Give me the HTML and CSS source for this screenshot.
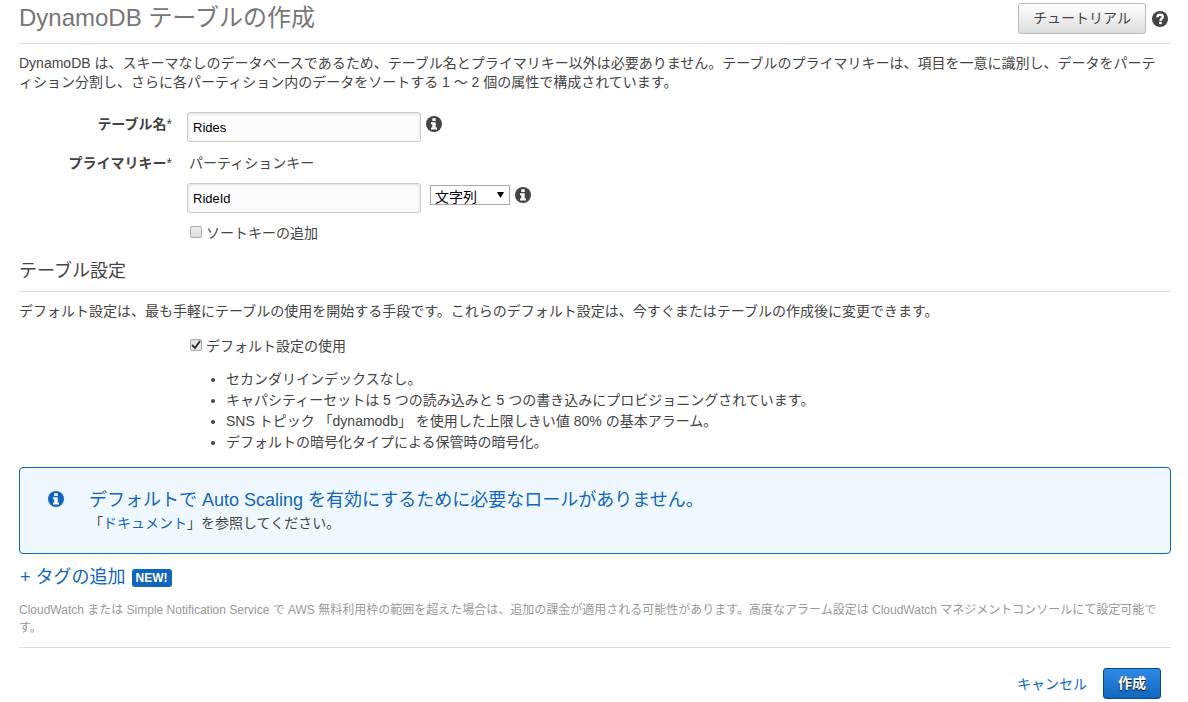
FILE: index.html
```html
<!DOCTYPE html>
<html lang="ja">

<head>
    <meta charset="UTF-8">
    <meta name="viewport" content="width=device-width, initial-scale=1.0">
    <title>DynamoDB テーブルの作成</title>
    <link rel="stylesheet" href="styles.css">
</head>

<body>

    <!-- Shared icons -->
    <svg class="sprite" aria-hidden="true">
        <symbol id="icon-info" viewBox="0 0 16 16">
            <circle cx="8" cy="8" r="8" fill="currentColor"/>
            <path d="M6.300 2.300h3.400v2.700H6.300zM5 6.200h4.700v5.200H11v2H5v-2h1.300V8.200H5z" fill="#fff"/>
        </symbol>
        <symbol id="icon-help" viewBox="0 0 16 16">
            <circle cx="8" cy="8" r="8" fill="currentColor"/>
            <path d="M5.300 6.300C5.400 4.600 6.500 3.800 8.100 3.800c1.600 0 2.700.8 2.700 2.200 0 1.800-2.300 1.700-2.300 3.700" fill="none" stroke="#fff" stroke-width="2.400"/>
            <path d="M7.200 10.700h2.600v2.500H7.200z" fill="#fff"/>
        </symbol>
    </svg>

    <!-- Header -->
    <header class="page-header">
        <h1>DynamoDB テーブルの作成</h1>
        <div class="header-actions">
            <button type="button" class="btn">チュートリアル</button>
            <a href="#" class="icon-link" aria-label="ヘルプ"><svg class="icon"><use href="#icon-help"/></svg></a>
        </div>
    </header>

    <main>
        <p class="intro">DynamoDB は、スキーマなしのデータベースであるため、テーブル名とプライマリキー以外は必要ありません。テーブルのプライマリキーは、項目を一意に識別し、データをパーティション分割し、さらに各パーティション内のデータをソートする 1 〜 2 個の属性で構成されています。</p>

        <form id="create-table">
            <!-- Table name and key -->
            <div class="form-row">
                <label class="form-label" for="table-name">テーブル名<span class="required">*</span></label>
                <div class="form-field">
                    <input type="text" class="text-input" id="table-name" value="Rides">
                    <svg class="icon"><use href="#icon-info"/></svg>
                </div>
            </div>
            <div class="form-row">
                <label class="form-label" for="partition-key">プライマリキー<span class="required">*</span></label>
                <div class="form-stack">
                    <span class="key-title">パーティションキー</span>
                    <div class="form-field key-field">
                        <input type="text" class="text-input" id="partition-key" value="RideId">
                        <select class="type-select" aria-label="キーの型">
                            <option>文字列</option>
                            <option>バイナリ</option>
                            <option>数値</option>
                        </select>
                        <svg class="icon"><use href="#icon-info"/></svg>
                    </div>
                    <label class="check"><input type="checkbox">ソートキーの追加</label>
                </div>
            </div>

            <!-- Table settings -->
            <h2>テーブル設定</h2>
            <p class="settings-text">デフォルト設定は、最も手軽にテーブルの使用を開始する手段です。これらのデフォルト設定は、今すぐまたはテーブルの作成後に変更できます。</p>
            <div class="settings">
                <label class="check"><input type="checkbox" checked>デフォルト設定の使用</label>
                <ul>
                    <li>セカンダリインデックスなし。</li>
                    <li>キャパシティーセットは 5 つの読み込みと 5 つの書き込みにプロビジョニングされています。</li>
                    <li>SNS トピック 「dynamodb」 を使用した上限しきい値 80% の基本アラーム。</li>
                    <li>デフォルトの暗号化タイプによる保管時の暗号化。</li>
                </ul>
            </div>

            <div class="alert">
                <svg class="icon"><use href="#icon-info"/></svg>
                <div>
                    <h3>デフォルトで Auto Scaling を有効にするために必要なロールがありません。</h3>
                    <p>「<a href="#">ドキュメント</a>」を参照してください。</p>
                </div>
            </div>

            <div class="tags">
                <a href="#">+ タグの追加</a>
                <span class="badge">NEW!</span>
            </div>

            <p class="note">CloudWatch または Simple Notification Service で AWS 無料利用枠の範囲を超えた場合は、追加の課金が適用される可能性があります。高度なアラーム設定は CloudWatch マネジメントコンソールにて設定可能です。</p>

            <!-- Buttons -->
            <div class="form-actions">
                <a href="#">キャンセル</a>
                <button type="submit" class="btn btn-primary">作成</button>
            </div>
        </form>
    </main>

</body>

</html>
```
FILE: styles.css
```css
/* Global styles */
* {
    box-sizing: border-box;
}

body {
    font-family: "Liberation Sans", "Noto Sans CJK JP", sans-serif;
    font-size: 14px;
    line-height: 20px;
    color: #444;
    background-color: #fff;
    margin: 0;
    padding: 0 17px 0 19px;
    text-spacing-trim: space-all;
}

h1, h2, h3, p {
    margin: 0;
    font-weight: normal;
}

a {
    color: #1166bb;
    text-decoration: none;
}

a:hover {
    text-decoration: underline;
}

.sprite {
    display: none;
}

.icon {
    display: block;
    flex: none;
    width: 16px;
    height: 16px;
    color: #444;
}

/* Header */
.page-header {
    display: flex;
    justify-content: space-between;
    align-items: flex-start;
    height: 44px;
    border-bottom: 1px solid #ddd;
}

h1 {
    font-size: 24px;
    line-height: 36px;
    color: #777;
}

.header-actions {
    display: flex;
    align-items: center;
    gap: 6px;
    padding: 3px 3px 0 0;
}

/* Buttons */
.btn {
    height: 31px;
    padding: 0 14px 3px;
    border: 1px solid #bbb;
    border-radius: 3px;
    background: linear-gradient(#fff, #ddd);
    color: #444;
    font-family: inherit;
    font-size: 14px;
    cursor: pointer;
}

.btn-primary {
    border-color: #0a4a8c;
    background: linear-gradient(#2f8ae6, #1166bb);
    color: #fff;
    font-weight: bold;
    text-shadow: 0 1px 1px #000;
}

.intro {
    margin: 10px 0 20px;
    padding-right: 10px;
    line-height: 19px;
}

/* Form */
.form-row {
    display: flex;
    gap: 15px;
    margin-bottom: 9px;
}

.form-label {
    flex: none;
    width: 153px;
    padding-top: 2px;
    font-weight: bold;
    text-align: right;
}

.required {
    font-weight: normal;
}

.form-field {
    display: flex;
    align-items: flex-start;
    gap: 5px;
}

.form-field .icon {
    margin-top: 4px;
}

.form-stack {
    padding-top: 2px;
}

.key-title {
    display: block;
    padding-left: 2px;
    margin-bottom: 10px;
}

.text-input {
    width: 234px;
    height: 30px;
    padding: 0 5px;
    border: 1px solid #ccc;
    border-radius: 3px;
    background-color: #fcfcfc;
    box-shadow: inset 0 1px 3px #ddd;
    color: #000;
    font-family: inherit;
    font-size: 13px;
}

.type-select {
    appearance: none;
    width: 80px;
    height: 20px;
    margin: 2px 0 0 4px;
    padding: 2px 4px 0;
    border: 1px solid #a9a9a9;
    border-radius: 0;
    background: url("data:image/svg+xml,%3Csvg xmlns='http://www.w3.org/2000/svg' width='7' height='6'%3E%3Cpath d='M0 0h7L3.5 6z'/%3E%3C/svg%3E") no-repeat right 5px top 6px #fff;
    color: #000;
    font-family: inherit;
    font-size: 14px;
    line-height: 18px;
}

.check {
    display: flex;
    align-items: center;
    gap: 4px;
    padding-left: 3px;
}

.check input {
    appearance: none;
    width: 12px;
    height: 12px;
    margin: 0 0 3px;
    border: 1px solid #aaa;
    border-radius: 2px;
    background: linear-gradient(#eee, #ddd);
}

.check input:checked {
    background: url("data:image/svg+xml,%3Csvg xmlns='http://www.w3.org/2000/svg' viewBox='0 0 10 10'%3E%3Cpath d='M1 5l3 3 5-7' fill='none' stroke='%23333' stroke-width='2'/%3E%3C/svg%3E") #e6e6e6;
}

.key-field {
    margin-bottom: 10px;
}

/* Table settings */
h2 {
    padding: 5px 0 6px;
    border-bottom: 1px solid #ddd;
    font-size: 18px;
    line-height: 28px;
}

.settings-text {
    margin: 9px 0 15px;
}

.settings {
    padding-left: 168px;
}

.settings ul {
    margin: 13px 0 14px;
    padding-left: 39px;
    line-height: 21px;
}

/* Alert */
.alert {
    display: flex;
    gap: 25px;
    padding: 20px 28px;
    border: 1px solid #1166bb;
    border-radius: 4px;
    background-color: #f0f8ff;
}

.alert .icon {
    margin-top: 3px;
    color: #1166bb;
}

.alert h3 {
    font-size: 18px;
    line-height: 25px;
    color: #1166bb;
}

/* Tags */
.tags {
    display: flex;
    align-items: center;
    gap: 6px;
    margin: 10px 0;
    padding-left: 1px;
    font-size: 18px;
    line-height: 27px;
}

.badge {
    padding: 0 4px;
    border-radius: 3px;
    background-color: #1166bb;
    color: #fff;
    font-size: 12px;
    font-weight: bold;
    line-height: 18px;
}

.note {
    padding-bottom: 10px;
    border-bottom: 1px solid #ddd;
    color: #999;
    font-size: 12px;
    line-height: 18px;
}

.form-actions {
    display: flex;
    justify-content: flex-end;
    align-items: center;
    gap: 16px;
    padding: 20px 10px 3px 0;
}
```
